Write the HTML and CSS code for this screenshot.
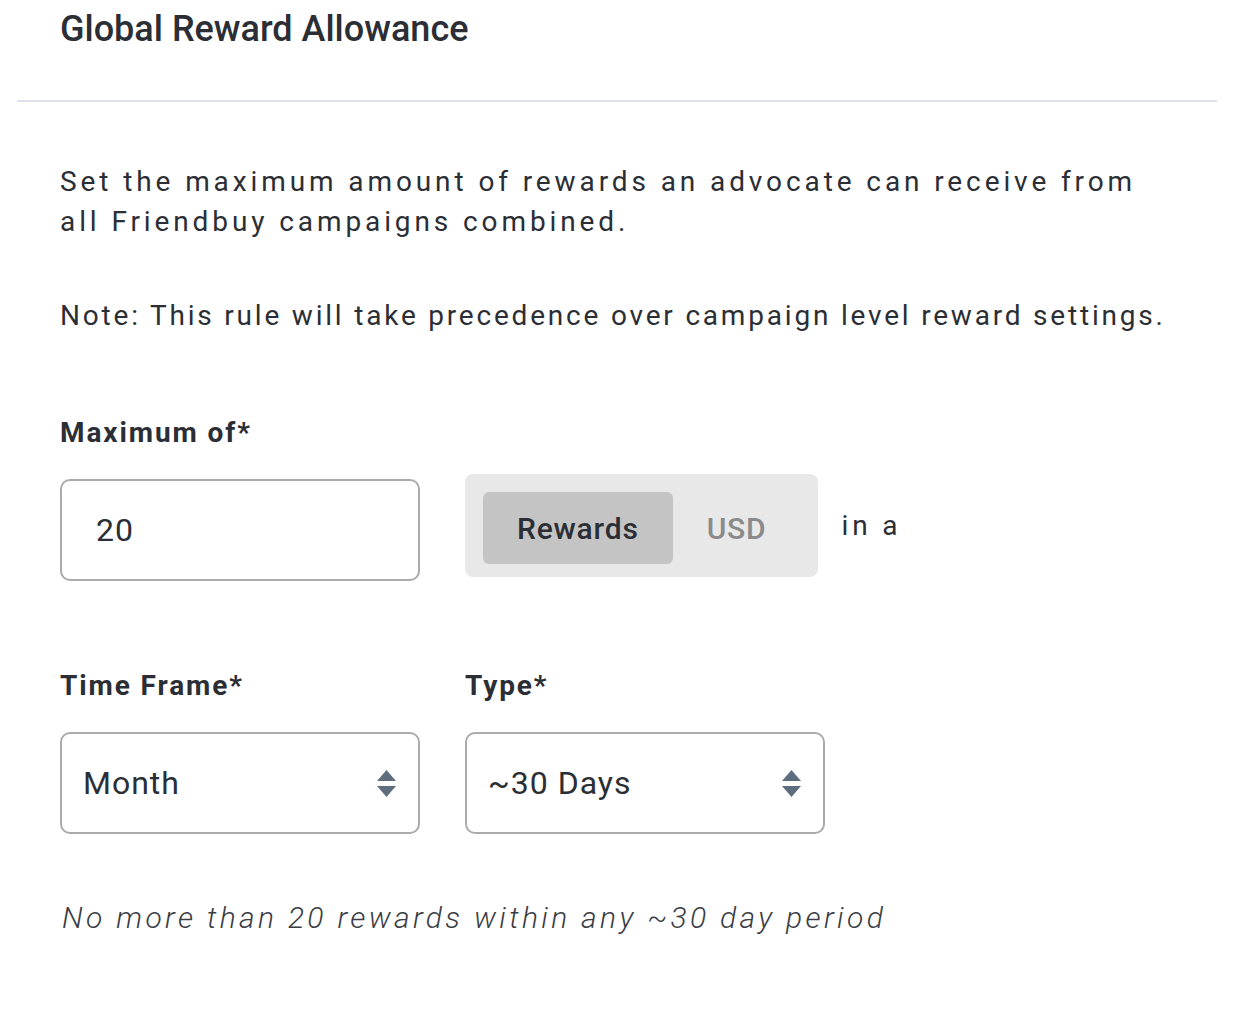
FILE: index.html
```html
<!DOCTYPE html>
<html lang="en">
<head>
<meta charset="utf-8">
<title>Global Reward Allowance</title>
<link rel="stylesheet" href="styles.css">
</head>
<body>
<div class="panel">
  <div class="panel-header">
    <h1 class="title">Global Reward Allowance</h1>
  </div>
  <div class="panel-body">
    <p class="desc">Set the maximum amount of rewards an advocate can receive from all Friendbuy campaigns combined.</p>
    <p class="note">Note: This rule will take precedence over campaign level reward settings.</p>

    <div class="field-label label-max">Maximum of*</div>
    <div class="row max-row">
      <div class="text-input">20</div>
      <div class="toggle">
        <div class="toggle-btn active">Rewards</div>
        <div class="toggle-btn">USD</div>
      </div>
      <div class="in-a">in a</div>
    </div>

    <div class="row select-row">
      <div class="field">
        <div class="field-label">Time Frame*</div>
        <div class="select">
          <span class="select-value">Month</span>
          <svg class="select-arrows" width="19" height="27" viewBox="0 0 19 27"><path d="M9.5 0 L19 11 H0 Z M0 16 H19 L9.5 27 Z" fill="#5e6e7f"/></svg>
        </div>
      </div>
      <div class="field">
        <div class="field-label">Type*</div>
        <div class="select">
          <span class="select-value">~30 Days</span>
          <svg class="select-arrows" width="19" height="27" viewBox="0 0 19 27"><path d="M9.5 0 L19 11 H0 Z M0 16 H19 L9.5 27 Z" fill="#5e6e7f"/></svg>
        </div>
      </div>
    </div>

    <p class="summary">No more than 20 rewards within any ~30 day period</p>
  </div>
</div>
</body>
</html>
```
FILE: styles.css
```css
html, body {
  margin: 0;
  padding: 0;
  background: #ffffff;
}
body {
  font-family: Roboto, "Liberation Sans", Arial, sans-serif;
  color: #2b2e35;
}
.panel {
  margin-left: 17px;
  width: 1200px;
}
.panel-header {
  padding: 7px 43px 49px;
  border-bottom: 2px solid #dfe2ea;
}
.title {
  margin: 0;
  font-size: 36px;
  line-height: 44px;
  font-weight: 500;
  color: #2b2e35;
}
.panel-body {
  padding: 60px 43px 0;
}
.desc, .note, .summary {
  margin: 0;
  font-size: 28px;
  line-height: 40px;
}
.desc {
  width: 1110px;
  letter-spacing: 3.9px;
}
.note {
  margin-top: 54px;
  letter-spacing: 2.8px;
}
.field-label {
  font-size: 28px;
  line-height: 40px;
  font-weight: 700;
  letter-spacing: 1.9px;
}
.label-max {
  margin-top: 77px;
}
.row {
  display: flex;
  align-items: flex-start;
}
.max-row {
  margin-top: 21px;
}
.text-input {
  box-sizing: border-box;
  width: 360px;
  height: 102px;
  margin-top: 5px;
  border: 2px solid #ababab;
  border-radius: 10px;
  padding-left: 34px;
  display: flex;
  align-items: center;
  font-size: 32px;
  letter-spacing: 1px;
}
.toggle {
  margin-left: 45px;
  display: flex;
  background: #e8e8e8;
  border-radius: 8px;
  padding: 18px 18px 13px;
}
.toggle-btn {
  height: 72px;
  padding: 0 34px;
  display: flex;
  align-items: center;
  font-size: 30px;
  font-weight: 500;
  letter-spacing: 0.8px;
  color: #8a8a8a;
  border-radius: 6px;
}
.toggle-btn.active {
  background: #c4c4c4;
  color: #2b2e35;
}
.in-a {
  margin-left: 23px;
  height: 103px;
  display: flex;
  align-items: center;
  font-size: 28px;
  letter-spacing: 3.9px;
}
.select-row {
  margin-top: 85px;
  gap: 45px;
}
.field .field-label {
  margin-bottom: 26px;
}
.select {
  box-sizing: border-box;
  width: 360px;
  height: 102px;
  border: 2px solid #ababab;
  border-radius: 10px;
  padding: 0 22px 0 21px;
  display: flex;
  align-items: center;
  justify-content: space-between;
  font-size: 32px;
  letter-spacing: 1px;
}
.select-arrows {
  display: block;
}
.summary {
  margin-top: 64px;
  padding-left: 2px;
  font-size: 30px;
  font-style: italic;
  font-weight: 300;
  color: #3a3d44;
  letter-spacing: 3.35px;
}
```
